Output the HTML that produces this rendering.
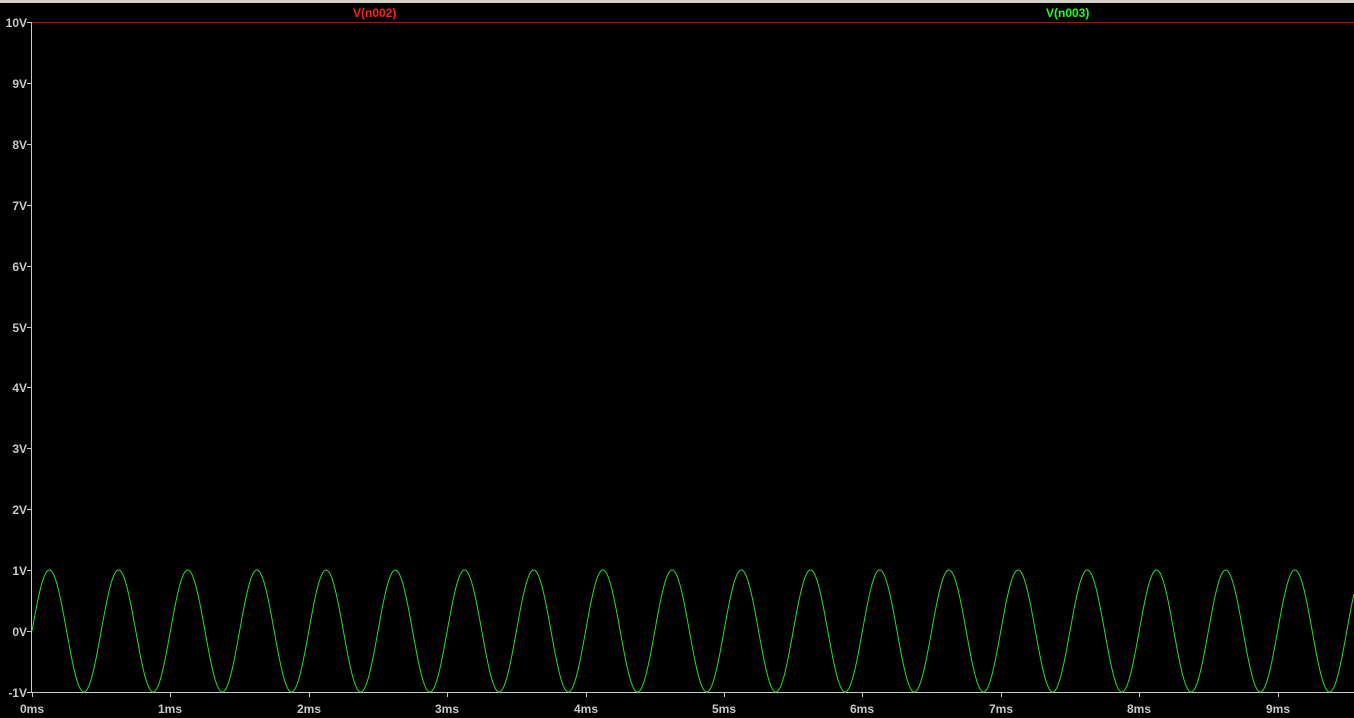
<!DOCTYPE html>
<html><head><meta charset="utf-8"><style>
html,body{margin:0;padding:0;background:#000;width:1354px;height:718px;overflow:hidden}
svg{display:block}
text{font-family:"Liberation Sans",Arial,sans-serif;font-size:12px;font-weight:bold;fill:#c8c8c8}
</style></head><body>
<svg id="s" width="1354" height="718" xmlns="http://www.w3.org/2000/svg">
<rect x="0" y="0" width="1354" height="718" fill="#000"/>
<rect x="0" y="0" width="1354" height="3" fill="#d4d0c8"/>
<line x1="32" y1="22.5" x2="1354" y2="22.5" stroke="#c00000" stroke-width="1"/>
<line x1="31.5" y1="22" x2="31.5" y2="693" stroke="#c8c8c8"/>
<line x1="31" y1="692.5" x2="1354" y2="692.5" stroke="#c8c8c8"/>
<text x="353" y="17" style="fill:#ff2020">V(n002)</text>
<text x="1046" y="17" style="fill:#20ff20">V(n003)</text>
<g id="yl"></g><g id="xl"></g>
<polyline id="w" fill="none" stroke="#20e020" stroke-width="1" points=""/>
</svg>
<script>
var s=document.getElementById('s'),ns='http://www.w3.org/2000/svg';
function el(t,a,txt){var e=document.createElementNS(ns,t);for(var k in a)e.setAttribute(k,a[k]);if(txt!=null)e.textContent=txt;s.appendChild(e);}
for(var v=10;v>=-1;v--){var y=22+(10-v)*670/11;
el('line',{x1:27,y1:Math.round(y)+0.5,x2:32,y2:Math.round(y)+0.5,stroke:'#c8c8c8'});
el('text',{x:27,y:Math.round(y)+5,'text-anchor':'end'},v+'V');}
for(var m=0;m<=9;m++){var x=32+m*138.4;
el('line',{x1:Math.round(x)+0.5,y1:692,x2:Math.round(x)+0.5,y2:697,stroke:'#c8c8c8'});
el('text',{x:Math.round(x)+(m==0?0:0),y:713,'text-anchor':'middle'},m+'ms');}
var p=[];for(var x=32;x<=1354;x+=0.5){p.push(x+','+(631-61*Math.sin(2*Math.PI*(x-32)/69.2)).toFixed(2));}
document.getElementById('w').setAttribute('points',p.join(' '));
s.appendChild(document.getElementById('w'));
</script>
</body></html>
